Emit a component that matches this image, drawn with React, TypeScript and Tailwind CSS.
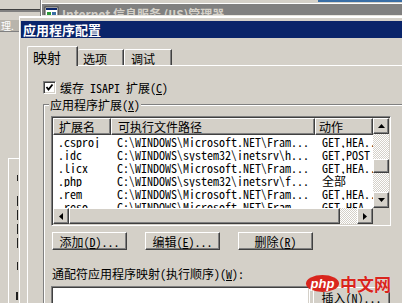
import React from "react";

const F = "font-['Noto_Sans_Mono_CJK_SC','Noto_Sans_CJK_SC',monospace]";

const RAISED =
  "border border-t-white border-l-white border-r-[#404040] border-b-[#404040] shadow-[inset_-1px_-1px_0_#808080] bg-[#d4d0c8]";
const SUNKEN =
  "border border-t-[#808080] border-l-[#808080] border-r-white border-b-white shadow-[inset_1px_1px_0_#404040,inset_-1px_-1px_0_#d4d0c8]";
const CHECKER =
  "bg-[repeating-conic-gradient(#ffffff_0_25%,#d4d0c8_0_50%)] bg-[length:2px_2px]";

function Tri({ dir }: { dir: "up" | "down" | "left" | "right" }) {
  if (dir === "up" || dir === "down") {
    const pts = dir === "up" ? "3.5,0 7,4 0,4" : "0,0 7,0 3.5,4";
    return (
      <svg width="7" height="4" viewBox="0 0 7 4">
        <polygon points={pts} fill="#000" />
      </svg>
    );
  }
  const pts = dir === "left" ? "0,3.5 4,0 4,7" : "0,0 4,3.5 0,7";
  return (
    <svg width="4" height="7" viewBox="0 0 4 7">
      <polygon points={pts} fill="#000" />
    </svg>
  );
}

function ArrowBtn({ dir }: { dir: "up" | "down" | "left" | "right" }) {
  return (
    <div className={`w-[16px] h-[16px] shrink-0 flex items-center justify-center ${RAISED}`}>
      <Tri dir={dir} />
    </div>
  );
}

const rows: [string, string, string][] = [
  [".csproj", "C:\\WINDOWS\\Microsoft.NET\\Fram...", "GET,HEA..."],
  [".idc", "C:\\WINDOWS\\system32\\inetsrv\\h...", "GET,POST"],
  [".licx", "C:\\WINDOWS\\Microsoft.NET\\Fram...", "GET,HEA..."],
  [".php", "C:\\WINDOWS\\system32\\inetsrv\\f...", "全部"],
  [".rem", "C:\\WINDOWS\\Microsoft.NET\\Fram...", "GET,HEA..."],
  [".reso", "C:\\WINDOWS\\Microsoft.NET\\Fram...", "GET,HEA..."],
];

function Background() {
  return (
    <>
      <div className="absolute left-[318px] top-0 w-[84px] h-[2px] bg-[#3a6ea5]" />
      <div className="absolute left-0 top-[9px] w-[40px] h-[1px] bg-[#404040]" />
      <div className="absolute left-0 top-[10px] w-[40px] h-[2px] bg-[#808080]" />
      <div className="absolute left-[40px] top-0 w-[1px] h-[18px] bg-[#808080]" />
      <div className="absolute left-[41px] top-0 w-[1px] h-[18px] bg-white" />
      <div className="absolute left-[42px] top-[3px] w-[360px] h-[1px] bg-white" />
      <div className="absolute left-[42px] top-[4px] w-[360px] h-[11px] overflow-hidden bg-[#808080] flex items-start">
        <svg width="16" height="16" viewBox="0 0 16 16" className="ml-[2px] mt-[1px] shrink-0">
          <rect x="1" y="2" width="13" height="11" fill="#fff" stroke="#404040" />
          <rect x="2" y="3" width="11" height="2" fill="#0a246a" />
          <rect x="3" y="7" width="4" height="4" fill="#2e9a3a" />
          <rect x="8" y="7" width="4" height="4" fill="#3a6ea5" />
        </svg>
        <span className="ml-[2px] mt-[3px] text-[12px] leading-[13px] font-bold text-[#d4d0c8] whitespace-nowrap font-['Noto_Sans_CJK_SC',sans-serif]">
          Internet 信息服务 (IIS)管理器
        </span>
      </div>
      <div className="absolute left-[42px] top-[15px] w-[360px] h-[1px] bg-[#e8e6e0]" />
      <div className="absolute left-0 top-[20px] w-[19px] h-[11px] overflow-hidden bg-[#b8b4ac] text-[10px] leading-[11px] text-white whitespace-nowrap font-['Noto_Sans_CJK_SC',sans-serif]">
        <span className="ml-[1px]">理.</span>
      </div>
      <div className="absolute left-0 top-[31px] w-[19px] h-[1px] bg-[#808080]" />
      <div className="absolute left-[8px] top-[158px] w-[11px] h-[150px] border-l border-t border-white" />
      <div className="absolute left-[17px] top-[175px] w-[1px] h-[6px] bg-[#202020]" />
      <div className="absolute left-[17px] top-[196px] w-[1px] h-[10px] bg-[#202020]" />
      <div className="absolute left-[17px] top-[210px] w-[1px] h-[10px] bg-[#202020]" />
      <div className="absolute left-[17px] top-[224px] w-[1px] h-[10px] bg-[#202020]" />
      <div className="absolute left-[17px] top-[238px] w-[1px] h-[10px] bg-[#202020]" />
      <div className="absolute left-[17px] top-[262px] w-[1px] h-[8px] bg-[#202020]" />
      <div className="absolute left-[16px] top-[292px] w-[2px] h-[8px] bg-[#202020]" />
    </>
  );
}

function Button({ children, className = "" }: { children: React.ReactNode; className?: string }) {
  return (
    <div className={`w-[75px] h-[18px] flex items-center justify-center shrink-0 whitespace-nowrap ${RAISED} ${className}`}>
      {children}
    </div>
  );
}

function ExtList() {
  return (
    <div className={`w-[340px] h-[110px] ${SUNKEN} p-[1px]`}>
      <div className="grid grid-cols-[320px_16px] grid-rows-[90px_16px] bg-white">
        <div className="overflow-hidden">
          <div className="grid grid-cols-[58px_204px_58px] h-[17px]">
            <div className={`${RAISED} pl-[5px] leading-[15px] whitespace-nowrap`}>扩展名</div>
            <div className={`${RAISED} pl-[6px] leading-[15px] whitespace-nowrap`}>可执行文件路径</div>
            <div className={`${RAISED} pl-[3px] leading-[15px] whitespace-nowrap`}>动作</div>
          </div>
          {rows.map((r, i) => (
            <div key={i} className="grid grid-cols-[58px_204px_58px] h-[13px] whitespace-nowrap">
              <div className="pl-[5px] overflow-hidden">{r[0]}</div>
              <div className="pl-[6px] overflow-hidden">{r[1]}</div>
              <div className="pl-[7px] overflow-hidden">{r[2]}</div>
            </div>
          ))}
        </div>
        <div className="flex flex-col">
          <ArrowBtn dir="up" />
          <div className={`flex-1 ${CHECKER} pt-[25px]`}>
            <div className={`h-[14px] w-[16px] ${RAISED}`} />
          </div>
          <ArrowBtn dir="down" />
        </div>
        <div className="flex">
          <ArrowBtn dir="left" />
          <div className={`w-[271px] h-[16px] ${RAISED}`} />
          <div className={`flex-1 ${CHECKER}`} />
          <ArrowBtn dir="right" />
        </div>
        <div className="bg-[#d4d0c8]" />
      </div>
    </div>
  );
}

function Dialog() {
  return (
    <div className="absolute left-[19px] top-[16px] w-[400px] h-[300px] bg-[#d4d0c8] border-l border-t-2 border-white pl-[1px] pt-[3px] flex flex-col">
      <div className="h-[17px] bg-[#0a246a] text-white font-bold text-[13px] leading-[17px] pl-[2px] whitespace-nowrap font-['Noto_Sans_CJK_SC',sans-serif]">
        应用程序配置
      </div>
      <div className="pl-[6px] pt-[8px]">
        <div className="flex items-end h-[19px]">
          <div className="relative z-10 w-[51px] h-[20px] mb-[-1px] bg-[#d4d0c8] border-l border-t border-white border-r border-r-[#404040] shadow-[inset_-1px_0_0_#808080] rounded-tl-[2px] pt-[3px] pl-[5px] text-[14px] leading-[14px]">
            映射
          </div>
          <div className="w-[46px] h-[16px] border-t border-white border-r border-r-[#404040] shadow-[inset_-1px_0_0_#808080] rounded-tl-[2px] pt-[2px] pl-[5px]">
            选项
          </div>
          <div className="w-[48px] h-[16px] border-l border-t border-white border-r border-r-[#404040] shadow-[inset_-1px_0_0_#808080] rounded-tl-[2px] pt-[2px] pl-[6px]">
            调试
          </div>
        </div>
        <div className="border-l border-t border-white h-[260px] pl-[15px] pt-[15px]">
          <div className="flex items-center gap-[4px] h-[13px]">
            <div className={`w-[13px] h-[13px] bg-white ${SUNKEN} flex items-center justify-center`}>
              <svg width="9" height="9" viewBox="0 0 9 9">
                <polyline points="1.5,4 3.5,6.5 7.5,1.5" fill="none" stroke="#000" strokeWidth="1.8" />
              </svg>
            </div>
            <span className="whitespace-nowrap">
              缓存 ISAPI 扩展(<span className="underline">C</span>)
            </span>
          </div>
          <fieldset className="mt-[4px] w-[380px] h-[250px] min-w-0 border border-[#808080] shadow-[inset_1px_1px_0_#ffffff] pl-[7px]">
            <legend className="ml-[-2px] px-[1px] bg-[#d4d0c8] leading-[13px] whitespace-nowrap">
              应用程序扩展(<span className="underline">X</span>)
            </legend>
            <div className="mt-[5px]">
              <ExtList />
            </div>
            <div className="flex gap-[18px] mt-[6px] pl-[1px]">
              <Button>
                添加(<span className="underline">D</span>)...
              </Button>
              <Button>
                编辑(<span className="underline">E</span>)...
              </Button>
              <Button>
                删除(<span className="underline">R</span>)
              </Button>
            </div>
            <div className="mt-[17px] pl-[1px] whitespace-nowrap">
              通配符应用程序映射(执行顺序)(<span className="underline">W</span>):
            </div>
            <div className="flex items-start mt-[6px]">
              <div className={`w-[259px] h-[60px] bg-white ${SUNKEN}`} />
              <Button className="ml-[3px] mt-[1px] w-[77px] h-[19px] items-start pt-[3px]">
                插入(<span className="underline">N</span>)...
              </Button>
            </div>
          </fieldset>
        </div>
      </div>
    </div>
  );
}

function Watermark() {
  return (
    <div className="absolute left-[306px] top-[275px] flex items-center gap-[1px]">
      <div className="w-[33px] h-[17px] rounded-[50%] bg-[#d9251d] flex items-center justify-center text-white italic font-bold text-[13px] leading-[13px] font-['Liberation_Sans',sans-serif]">
        php
      </div>
      <span className="text-[#d9251d] font-bold text-[17px] leading-[17px] font-['Noto_Sans_CJK_SC',sans-serif] [text-shadow:0_0_1px_#fff]">
        中文网
      </span>
    </div>
  );
}

export default function App() {
  return (
    <div className={`relative w-[402px] h-[303px] overflow-hidden bg-[#d4d0c8] text-black text-[12px] leading-[13px] ${F}`}>
      <Background />
      <Dialog />
      <Watermark />
    </div>
  );
}
